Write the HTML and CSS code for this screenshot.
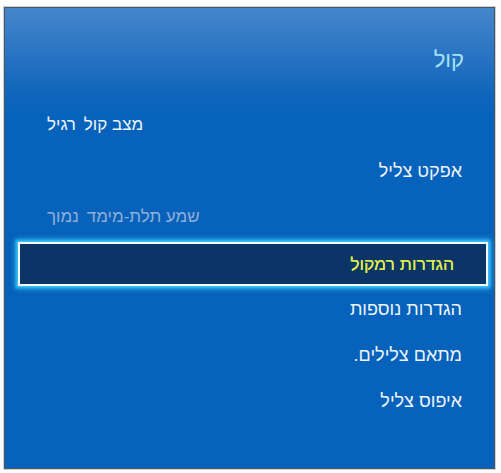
FILE: index.html
```html
<!DOCTYPE html>
<html lang="he" dir="rtl">
<head>
<meta charset="utf-8">
<title>קול</title>
<link rel="stylesheet" href="styles.css">
</head>
<body>
<div class="panel">
  <div class="header"><span class="title">קול</span></div>
  <ul class="menu">
    <li class="row row-left"><span class="label">מצב קול</span><span class="value">רגיל</span></li>
    <li class="row">אפקט צליל</li>
    <li class="row row-left row-disabled"><span class="label">שמע תלת-מימד</span><span class="value">נמוך</span></li>
    <li class="row row-selected"><div class="select-box">הגדרות רמקול</div></li>
    <li class="row">הגדרות נוספות</li>
    <li class="row">מתאם צלילים.</li>
    <li class="row">איפוס צליל</li>
  </ul>
</div>
</body>
</html>
```
FILE: styles.css
```css
html, body {
  margin: 0;
  padding: 0;
  background: #fdfdfd;
}
body {
  font-family: "Liberation Sans", "DejaVu Sans", sans-serif;
  width: 501px;
  height: 473px;
  overflow: hidden;
}
.panel {
  box-sizing: border-box;
  margin: 7px 6px 0 4px;
  width: 491px;
  height: 462px;
  border: 1px solid #4a5560;
  box-shadow: 0 0 0 1px #c8d0d8;
  background: linear-gradient(to bottom, #4586cb 0px, #2a74c3 45px, #0f66bb 85px, #0662ba 110px, #0662ba 100%);
  display: flex;
  flex-direction: column;
}
.header {
  padding: 40px 30px 0 30px;
  height: 24px;
  display: flex;
  align-items: center;
}
.title {
  color: #a6e2f4;
  font-size: 22px;
}
.menu {
  list-style: none;
  margin: 0;
  padding: 30px 0 0 0;
  display: flex;
  flex-direction: column;
}
.row {
  height: 46px;
  display: flex;
  align-items: center;
  padding: 0 32px 0 42px;
  color: #eef4fb;
  font-size: 18px;
}
.row-left {
  justify-content: flex-end;
  gap: 8px;
  font-size: 17px;
}
.row-disabled {
  color: #8fb0d8;
}
.row-selected {
  padding: 0;
  align-items: flex-end;
}
.select-box {
  box-sizing: border-box;
  flex: 1;
  height: 44px;
  margin: 0 6px 0 13px;
  padding: 0 32px 0 0;
  display: flex;
  align-items: center;
  background: #0b3566;
  border: 2px solid #f2fbff;
  box-shadow: 0 0 3px 2px #3ec6fa, 0 0 6px 3px rgba(62, 198, 250, 0.5);
  color: #dcea4c;
  font-size: 17.5px;
  text-shadow: 0 0 0.5px #dcea4c;
}
```
